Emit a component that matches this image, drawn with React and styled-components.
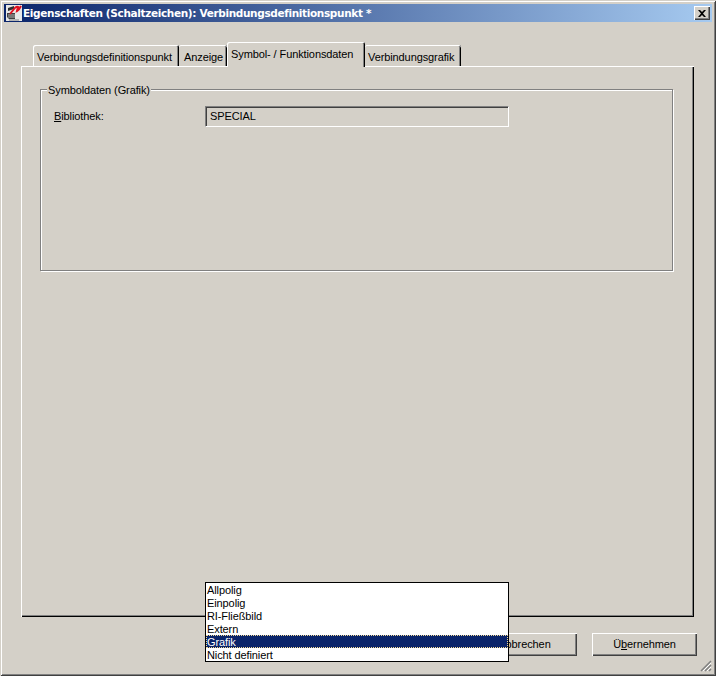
import React from "react";
import styled, { createGlobalStyle } from "styled-components";

const Global = createGlobalStyle`
  html, body { margin: 0; padding: 0; background: #d4d0c8; }
  * { box-sizing: border-box; }
`;

const Window = styled.div`
  position: relative;
  width: 716px;
  height: 676px;
  display: flex;
  flex-direction: column;
  padding: 2px;
  background: #d4d0c8;
  color: #000;
  font-family: "Liberation Sans", "Noto Sans", sans-serif;
  font-size: 11px;
  line-height: 13px;
  letter-spacing: -0.1px;
  overflow: hidden;
  box-shadow: inset 1px 1px 0 #d4d0c8, inset -1px -1px 0 #404040, inset 2px 2px 0 #fff, inset -2px -2px 0 #808080;
`;

const Inner = styled.div`
  flex: 1;
  display: flex;
  flex-direction: column;
  padding: 2px;
`;

const TitleBar = styled.div`
  height: 18px;
  display: flex;
  align-items: center;
  padding: 0 2px;
  background: linear-gradient(to right, #0a246a, #a6caf0);
`;

const TitleIcon = styled.svg`
  width: 16px;
  height: 16px;
  flex: none;
`;

const TitleText = styled.div`
  flex: 1;
  margin-left: 1px;
  color: #fff;
  font-family: "DejaVu Sans", sans-serif;
  font-weight: 700;
  font-size: 10.5px;
  letter-spacing: -0.35px;
  white-space: nowrap;
`;

const CloseButton = styled.div`
  width: 16px;
  height: 14px;
  display: flex;
  align-items: center;
  justify-content: center;
  background: #d4d0c8;
  box-shadow: inset 1px 1px 0 #fff, inset -1px -1px 0 #404040, inset -2px -2px 0 #808080;
`;

const TabRow = styled.div`
  height: 24px;
  margin: 20px 19px 0 17px;
  padding-left: 12px;
  display: flex;
  align-items: flex-end;
  position: relative;
  z-index: 1;
`;

const Tab = styled.div`
  width: ${(p) => p.$w}px;
  height: ${(p) => (p.$active ? 25 : 21)}px;
  margin-bottom: ${(p) => (p.$active ? -1 : 0)}px;
  padding: 6px 0 0 ${(p) => p.$pl}px;
  background: #d4d0c8;
  white-space: nowrap;
  border-radius: 2px 2px 0 0;
  box-shadow: inset ${(p) => (p.$noLeft ? 0 : 1)}px 1px 0 #fff, inset -1px 0 0 #000, inset -2px 0 0 #808080;
`;

const Panel = styled.div`
  height: 551px;
  margin: 0 18px 0 17px;
  padding: 23px 21px 0 19px;
  background: #d4d0c8;
  box-shadow: inset 1px 1px 0 #fff, inset -1px -1px 0 #000, inset -2px -2px 0 #808080;
`;

const Group = styled.div`
  position: relative;
  height: 182px;
  padding: 16px 13px 0;
  border: 1px solid #808080;
  box-shadow: inset 1px 1px 0 #fff, 1px 1px 0 #fff;
`;

const Legend = styled.div`
  position: absolute;
  top: -6px;
  left: 6px;
  padding: 0 1px;
  background: #d4d0c8;
`;

const FieldRow = styled.div`
  display: flex;
  align-items: center;
  height: 21px;
`;

const Label = styled.div`
  width: 151px;
  flex: none;
`;

const Field = styled.div`
  width: 304px;
  height: 21px;
  padding: 3px 0 0 4px;
  background: #d4d0c8;
  border: 1px solid;
  border-color: #808080 #fff #fff #808080;
  box-shadow: inset 1px 1px 0 #404040;
`;

const Footer = styled.div`
  display: flex;
  justify-content: flex-end;
  gap: 15px;
  margin: 16px 15px 0 0;
`;

const Button = styled.div`
  width: 105px;
  height: 23px;
  padding-bottom: 1px;
  display: flex;
  align-items: center;
  justify-content: center;
  background: #d4d0c8;
  box-shadow: inset 1px 1px 0 #fff, inset -1px -1px 0 #404040, inset -2px -2px 0 #808080;
`;

const Popup = styled.div`
  position: absolute;
  left: 205px;
  top: 582px;
  width: 304px;
  height: 80px;
  border: 1px solid #000;
  background: #fff;
`;

const Item = styled.div`
  height: 13px;
  padding: 1px 0 0 1px;
  white-space: nowrap;
  ${(p) =>
    p.$selected &&
    `background: #0a246a; color: #fff; outline: 1px dotted #f5db95; outline-offset: -1px;`}
`;

const Grip = styled.svg`
  position: absolute;
  right: 4px;
  bottom: 4px;
  width: 12px;
  height: 12px;
`;

const items = ["Allpolig", "Einpolig", "RI-Fließbild", "Extern", "Grafik", "Nicht definiert"];

export default function App() {
  return (
    <Window>
      <Global />
      <Inner>
        <TitleBar>
          <TitleIcon viewBox="0 0 16 16">
            <rect x="0" y="0" width="16" height="16" fill="#e8e8e8" />
            <path d="M2 3 8 1v3L2 6z" fill="#303030" />
            <path d="M1 8h8v6H3L1 12z" fill="#404040" />
            <path d="M2 10h7M2 12h7" stroke="#b0b0b0" />
            <path d="M4 9 L8 4 Q10 1 12 2 L11 6 Q13 5 15 1" fill="none" stroke="#e01020" strokeWidth="2" />
            <path d="M3 15h10" stroke="#808080" />
          </TitleIcon>
          <TitleText>Eigenschaften (Schaltzeichen): Verbindungsdefinitionspunkt *</TitleText>
          <CloseButton>
            <svg width="8" height="7" viewBox="0 0 8 7">
              <path d="M0 0h2l2 2 2-2h2L5 3.500 8 7H6L4 5 2 7H0l3-3.500z" fill="#000" />
            </svg>
          </CloseButton>
        </TitleBar>
        <TabRow>
          <Tab $w={146} $pl={4}>Verbindungsdefinitionspunkt</Tab>
          <Tab $w={48} $pl={5} $noLeft>Anzeige</Tab>
          <Tab $w={138} $pl={4} $active>Symbol- / Funktionsdaten</Tab>
          <Tab $w={96} $pl={3} $noLeft>Verbindungsgrafik</Tab>
        </TabRow>
        <Panel>
          <Group>
            <Legend>Symboldaten (Grafik)</Legend>
            <FieldRow>
              <Label><u>B</u>ibliothek:</Label>
              <Field>SPECIAL</Field>
            </FieldRow>
          </Group>
        </Panel>
        <Footer>
          <Button>Abbrechen</Button>
          <Button>Ü<u>b</u>ernehmen</Button>
        </Footer>
      </Inner>
      <Popup>
        {items.map((t) => (
          <Item key={t} $selected={t === "Grafik"}>{t}</Item>
        ))}
      </Popup>
      <Grip viewBox="0 0 12 12">
        <path d="M11 1 1 11M11 5 5 11M11 9 9 11" stroke="#808080" strokeWidth="1.500" />
        <path d="M11 3 3 11M11 7 7 11" stroke="#fff" />
      </Grip>
    </Window>
  );
}
